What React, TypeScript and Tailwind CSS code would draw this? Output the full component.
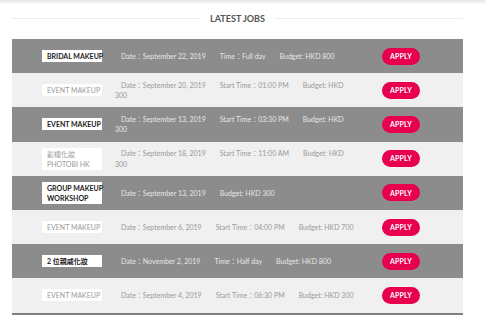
import React from 'react';

type Job = {
  title: string[];
  date: string;
  timeLabel?: string;
  time?: string;
  budget: string;
};

const jobs: Job[] = [
  { title: ['BRIDAL MAKEUP'], date: 'September 22, 2019', timeLabel: 'Time', time: 'Full day', budget: 'HKD 800' },
  { title: ['EVENT MAKEUP'], date: 'September 20, 2019', timeLabel: 'Start Time', time: '01:00 PM', budget: 'HKD 300' },
  { title: ['EVENT MAKEUP'], date: 'September 13, 2019', timeLabel: 'Start Time', time: '03:30 PM', budget: 'HKD 300' },
  { title: ['影樓化妝', 'PHOTOBI HK'], date: 'September 18, 2019', timeLabel: 'Start Time', time: '11:00 AM', budget: 'HKD 300' },
  { title: ['GROUP MAKEUP', 'WORKSHOP'], date: 'September 13, 2019', budget: 'HKD 300' },
  { title: ['EVENT MAKEUP'], date: 'September 6, 2019', timeLabel: 'Start Time', time: '04:00 PM', budget: 'HKD 700' },
  { title: ['2 位親戚化妝'], date: 'November 2, 2019', timeLabel: 'Time', time: 'Half day', budget: 'HKD 800' },
  { title: ['EVENT MAKEUP'], date: 'September 4, 2019', timeLabel: 'Start Time', time: '06:30 PM', budget: 'HKD 300' },
];

function JobRow({ job, dark }: { job: Job; dark: boolean }) {
  return (
    <div
      className={`flex items-center h-[34.2px] pl-[30px] ${dark ? 'bg-[#8c8c8c] text-[#e6e6e6]' : 'bg-[#f0f0f0] text-[#9a9a9a]'}`}
    >
      {/* Job title tag */}
      <div
        className={`w-[60px] shrink-0 bg-white pl-[5px] py-[1px] text-[7px] leading-[10px] whitespace-nowrap ${dark ? 'font-bold text-[#222]' : 'text-[#9a9a9a]'}`}
      >
        {job.title.map((t) => (
          <div key={t}>{t}</div>
        ))}
      </div>

      {/* Details */}
      <div className="ml-[13px] w-[240px] shrink-0 text-[7px] leading-[10.5px]">
        <span className="ml-[6px] mr-[8px]">Date：{job.date}</span>
        {job.time && (
          <span className="ml-[6px] mr-[8px]">
            {job.timeLabel}：{job.time}
          </span>
        )}
        <span className="ml-[6px]">Budget: {job.budget}</span>
      </div>

      <button className="ml-[27px] w-[38px] h-[17px] rounded-full bg-[#e8004f] text-white text-[7px] font-bold tracking-[0.2px]">
        APPLY
      </button>
    </div>
  );
}

export default function App() {
  return (
    <div
      className="w-[485px] h-[315px] overflow-hidden bg-white"
      style={{ fontFamily: 'Lato, "Noto Sans CJK TC", sans-serif' }}
    >
      {/* top shadow */}
      <div className="h-[4px] bg-gradient-to-b from-[#e4e4e4] to-white" />

      {/* Section title */}
      <div className="flex items-center h-[35px] pb-[6px] px-[12px] w-[475px]">
        <div className="flex-1 h-px bg-[#ededed]" />
        <span className="mx-[9px] text-[9px] font-bold text-[#555]">LATEST JOBS</span>
        <div className="flex-1 h-px bg-[#ededed]" />
      </div>

      {/* Job list */}
      <div className="ml-[12px] w-[451px]">
        {jobs.map((job, i) => (
          <JobRow key={i} job={job} dark={i % 2 === 0} />
        ))}
        <div className="h-[6px] bg-[#7f7f7f]" />
      </div>
    </div>
  );
}
